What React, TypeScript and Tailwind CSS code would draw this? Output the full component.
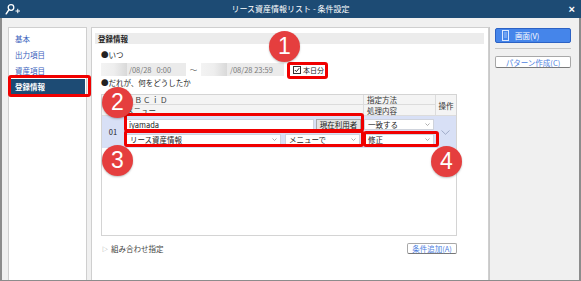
import React from 'react'

const jp = "[font-family:'Noto_Sans_CJK_JP',sans-serif]"

function Caret() {
  return (
    <svg width="5" height="3" viewBox="0 0 5 3" className="flex-shrink-0">
      <path d="M0.5 0.5 L2.5 2.5 L4.5 0.5" fill="none" stroke="#9a9a9a" strokeWidth="0.8" />
    </svg>
  )
}

function Select({ value, className }: { value: string; className: string }) {
  return (
    <div
      className={`h-[11px] bg-white border border-[#cfd3dc] flex items-center justify-between pl-[3px] pr-[3px] ${className}`}
    >
      <span className="leading-[9px]">{value}</span>
      <Caret />
    </div>
  )
}

function Marker({ n, className }: { n: number; className: string }) {
  return (
    <div
      className={`absolute w-[31px] h-[31px] rounded-full bg-[#e53e3e] shadow-[0_1px_2px_rgba(0,0,0,0.25)] flex items-center justify-center text-white text-[23px] leading-none [font-family:'Liberation_Sans',sans-serif] ${className}`}
    >
      {n}
    </div>
  )
}

function RedBox({ className }: { className: string }) {
  return <div className={`absolute border-[3px] border-[#f00000] rounded-[3px] ${className}`} />
}

export default function App() {
  return (
    <div className={`relative w-[581px] h-[281px] overflow-hidden bg-[#f0f0f0] flex flex-col text-[7.5px] text-[#222] ${jp}`}>
      {/* title bar */}
      <div className="h-[18px] bg-[#1d4b74] flex items-center px-[5px] text-white">
        <div className="w-[16px] flex items-center">
          <svg width="16" height="12" viewBox="0 0 16 12">
            <circle cx="6" cy="4.5" r="2.8" fill="none" stroke="white" strokeWidth="1.3" />
            <path d="M4 6.6 L1.2 10.8" stroke="white" strokeWidth="1.5" strokeLinecap="round" />
            <path d="M10.5 8 H15 M12.75 5.8 V10.2" stroke="white" strokeWidth="1" />
          </svg>
        </div>
        <div className="flex-1 text-center leading-[10px] text-[8px]">リース資産情報リスト - 条件設定</div>
        <div className="w-[16px] text-right text-[11px] font-bold leading-none [font-family:'Liberation_Sans',sans-serif] pr-[1px]">
          ×
        </div>
      </div>

      {/* body */}
      <div className="flex-1 flex border-x-2 border-b border-[#8c8c8c] pt-[9px] pl-[6px] min-h-0">
        {/* left nav */}
        <div className="w-[79px] bg-white border border-b-0 border-[#cfcfcf] pt-[3px] px-[1px] flex flex-col text-[#3b5fbd]">
          <div className="h-[16px] flex items-center pl-[5px]">基本</div>
          <div className="h-[16px] flex items-center pl-[5px]">出力項目</div>
          <div className="h-[16px] flex items-center pl-[5px]">資産項目</div>
          <div className="h-[15px] flex items-center pl-[5px] bg-[#1d4b74] text-white font-bold">登録情報</div>
        </div>

        {/* main panel */}
        <div className="ml-[4px] w-[398px] bg-white border border-b-0 border-[#cfcfcf] pt-[5px] pl-[3px] pr-[4px] flex flex-col">
          <div className="h-[11px] bg-[#ececec] flex items-center pl-[3px] font-bold leading-[10px]">登録情報</div>

          <div className="pl-[6px] flex flex-col">
            <div className="h-[10px] mt-[6px] flex items-center leading-[10px]">●いつ</div>

            {/* date row */}
            <div className="mt-[3px] h-[13px] flex items-center">
              <div className="w-[85px] h-[13px] bg-[#ebebeb] flex items-center text-[#7a7a7a]">
                <div className="w-[26px] h-full bg-gradient-to-r from-[#f3f3f3] via-[#eeeeee] to-[#d9d9d9]" />
                <span className="ml-[2px] leading-[10px] whitespace-pre">/08/28   0:00</span>
              </div>
              <span className="w-[15px] text-center text-[#555]">〜</span>
              <div className="w-[83px] h-[13px] bg-[#ebebeb] flex items-center text-[#7a7a7a]">
                <div className="w-[26px] h-full bg-gradient-to-r from-[#f3f3f3] via-[#eeeeee] to-[#d9d9d9]" />
                <span className="ml-[3px] leading-[10px]">/08/28 23:59</span>
              </div>
              <div className="ml-[9px] flex items-center gap-[2px]">
                <div className="w-[8px] h-[8px] border border-[#333] bg-white flex items-center justify-center">
                  <svg width="6" height="6" viewBox="0 0 6 6">
                    <path d="M0.8 3 L2.4 4.6 L5.2 1.2" fill="none" stroke="#222" strokeWidth="1" />
                  </svg>
                </div>
                <span className="leading-[10px] text-[7px]">本日分</span>
              </div>
            </div>

            <div className="h-[10px] mt-[2px] flex items-center leading-[10px]">●だれが、何をどうしたか</div>

            {/* table */}
            <div className="mt-[6px] w-[356px] h-[142px] border border-[#d4d4d4] flex flex-col">
              <div className="grid grid-cols-[261px_72px_21px] grid-rows-[10px_10px] bg-[#f4f4f4] border-b border-[#dcdcdc] text-[#333]">
                <div className="pl-[24px] flex items-center border-b border-[#dcdcdc] leading-[9px] tracking-[1px]">ＯＢＣｉＤ</div>
                <div className="pl-[3px] flex items-center border-l border-b border-[#dcdcdc] leading-[9px]">指定方法</div>
                <div className="row-span-2 flex items-center justify-center border-l border-[#dcdcdc] leading-[9px]">操作</div>
                <div className="pl-[24px] flex items-center leading-[9px]">メニュー</div>
                <div className="pl-[3px] flex items-center border-l border-[#dcdcdc] leading-[9px]">処理内容</div>
              </div>

              <div className="grid grid-cols-[21px_240px_72px_21px] h-[32px] bg-[#d8e0f6]">
                <div className="flex items-center justify-center pl-[1px]">01</div>
                <div className="pl-[3px] pr-[2px] flex flex-col justify-center gap-[4px]">
                  <div className="flex items-center gap-[2px]">
                    <div className="w-[188px] h-[11px] bg-white border border-[#cfd3dc] flex items-center pl-[2px] leading-[9px]">
                      iyamada
                    </div>
                    <div className="flex-1 h-[11px] bg-[#e3e3e3] border border-[#a9a9a9] flex items-center justify-center leading-[9px]">
                      現在利用者
                    </div>
                  </div>
                  <div className="flex items-center gap-[4px]">
                    <Select value="リース資産情報" className="w-[155px]" />
                    <Select value="メニューで" className="w-[75px]" />
                  </div>
                </div>
                <div className="px-[1px] flex flex-col justify-center gap-[4px]">
                  <Select value="一致する" className="w-[70px]" />
                  <Select value="修正" className="w-[70px]" />
                </div>
                <div className="flex items-center justify-center">
                  <svg width="9" height="5" viewBox="0 0 9 5">
                    <path d="M0.5 0.5 L4.5 4.3 L8.5 0.5" fill="none" stroke="#9aa6c4" strokeWidth="0.9" />
                  </svg>
                </div>
              </div>
            </div>

            <div className="mt-[7px] w-[356px] flex items-center justify-between">
              <div className="flex items-center gap-[3px] pl-[1px] text-[#444] leading-[10px]">
                <span className="text-[6px] text-[#888]">▷</span>
                <span>組み合わせ指定</span>
              </div>
              <div className="w-[50px] h-[11px] bg-white border border-[#a8a8a8] border-b-[#777] rounded-[2px] flex items-center justify-center text-[#4f7fe0] leading-[9px]">
                条件追加(A)
              </div>
            </div>
          </div>
        </div>

        {/* right panel */}
        <div className="flex-1 border-l border-[#c8c8c8] pl-[5px] pr-[8px] pt-[1px] flex flex-col">
          <div className="h-[15px] bg-[#4585ea] border border-[#2c62c4] rounded-[2px] flex items-center pl-[6px] gap-[6px] text-white">
            <svg width="7" height="11" viewBox="0 0 7 11">
              <rect x="0.5" y="0.5" width="6" height="10" fill="none" stroke="#dce8ff" strokeWidth="1" />
              <path d="M2 3 H5 M2 5 H5 M2 7 H5" stroke="#dce8ff" strokeWidth="0.6" />
            </svg>
            <span className="leading-[9px]">画面(V)</span>
          </div>
          <div className="mt-[5px] h-px bg-[#c6c6c6]" />
          <div className="mt-[7px] h-[12px] bg-white border border-[#a8a8a8] border-b-[#7a7a7a] rounded-[2px] flex items-center justify-center text-[#4f7fe0] leading-[9px]">
            パターン作成(C)
          </div>
        </div>
      </div>

      {/* annotations */}
      <RedBox className="left-[8px] top-[75px] w-[83px] h-[22px]" />
      <RedBox className="left-[287px] top-[62px] w-[41px] h-[17px]" />
      <RedBox className="left-[124px] top-[113px] w-[240px] h-[19px]" />
      <RedBox className="left-[124px] top-[130px] w-[240px] h-[17px]" />
      <RedBox className="left-[363px] top-[131px] w-[76px] h-[16px]" />
      <Marker n={1} className="left-[269px] top-[31px]" />
      <Marker n={2} className="left-[102px] top-[87px]" />
      <Marker n={3} className="left-[102px] top-[145px]" />
      <Marker n={4} className="left-[431px] top-[146px]" />
    </div>
  )
}
